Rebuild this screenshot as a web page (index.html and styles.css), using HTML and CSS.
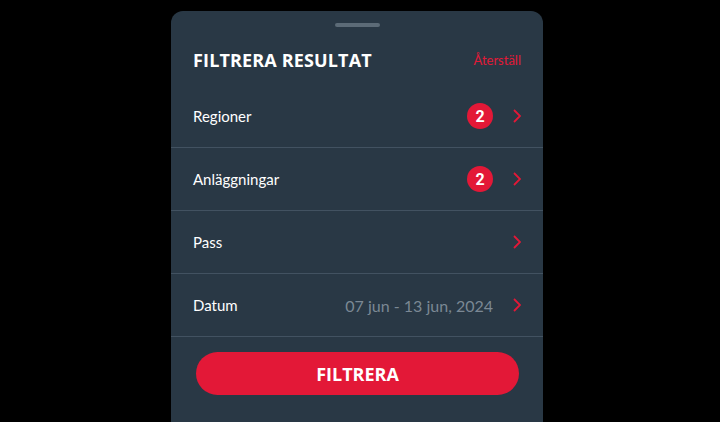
FILE: index.html
```html
<!DOCTYPE html>
<html lang="sv">
<head>
    <meta charset="UTF-8">
    <meta name="viewport" content="width=device-width, initial-scale=1.0">
    <title>Filtrera resultat</title>
    <link rel="stylesheet" href="styles.css">
</head>
<body>

    <!-- Filterpanel -->
    <div class="sheet">
        <div class="handle"></div>

        <div class="sheet-header">
            <h1>FILTRERA RESULTAT</h1>
            <a class="reset" href="#">Återställ</a>
        </div>

        <div class="filter-list">
            <div class="filter-row">
                <span class="label">Regioner</span>
                <span class="badge">2</span>
                <svg class="chevron" viewBox="0 0 8 14"><polyline points="1,1 7,7 1,13"/></svg>
            </div>
            <div class="filter-row">
                <span class="label">Anläggningar</span>
                <span class="badge">2</span>
                <svg class="chevron" viewBox="0 0 8 14"><polyline points="1,1 7,7 1,13"/></svg>
            </div>
            <div class="filter-row">
                <span class="label">Pass</span>
                <svg class="chevron" viewBox="0 0 8 14"><polyline points="1,1 7,7 1,13"/></svg>
            </div>
            <div class="filter-row">
                <span class="label">Datum</span>
                <span class="value">07 jun - 13 jun, 2024</span>
                <svg class="chevron" viewBox="0 0 8 14"><polyline points="1,1 7,7 1,13"/></svg>
            </div>
        </div>

        <div class="actions">
            <button class="filter-btn">FILTRERA</button>
        </div>
    </div>

</body>
</html>
```

FILE: styles.css
```css
body {
    margin: 0;
    background-color: #000;
    font-family: Lato, "Open Sans", sans-serif;
    height: 422px;
    overflow: hidden;
}

.sheet {
    width: 372px;
    margin: 11px 0 0 171px;
    background-color: #293845;
    border-radius: 12px 12px 0 0;
    height: 411px;
    display: flex;
    flex-direction: column;
}

.handle {
    width: 45px;
    height: 4px;
    margin: 12px auto 0;
    background-color: #5c6b77;
    border-radius: 2px;
}

.sheet-header {
    display: flex;
    align-items: center;
    justify-content: space-between;
    padding: 21px 22px 13px 22px;
    height: 24px;
}

h1 {
    margin: 0;
    font-family: "Open Sans", sans-serif;
    font-weight: 700;
    font-size: 18px;
    color: #fff;
    letter-spacing: 0.15px;
}

.reset {
    color: #e31837;
    text-decoration: none;
    font-size: 13px;
}

.filter-row {
    display: flex;
    align-items: center;
    height: 62px;
    padding: 0 22px;
    border-bottom: 1px solid #425261;
}

.label {
    flex: 1;
    color: #fff;
    font-size: 15px;
}

.badge {
    width: 26px;
    height: 26px;
    border-radius: 50%;
    background-color: #e31837;
    color: #fff;
    font-family: Roboto, sans-serif;
    font-weight: 700;
    font-size: 16px;
    display: flex;
    align-items: center;
    justify-content: center;
}

.value {
    color: #7b8894;
    font-size: 16px;
}

.chevron {
    width: 8px;
    height: 14px;
    margin-left: 20px;
    fill: none;
    stroke: #e31837;
    stroke-width: 1.8;
}

.actions {
    padding: 15px 24px 0 25px;
}

.filter-btn {
    width: 100%;
    height: 43px;
    border: none;
    border-radius: 22px;
    background-color: #e31837;
    color: #fff;
    font-family: "Open Sans", sans-serif;
    font-weight: 700;
    font-size: 18px;
    cursor: pointer;
}
```
